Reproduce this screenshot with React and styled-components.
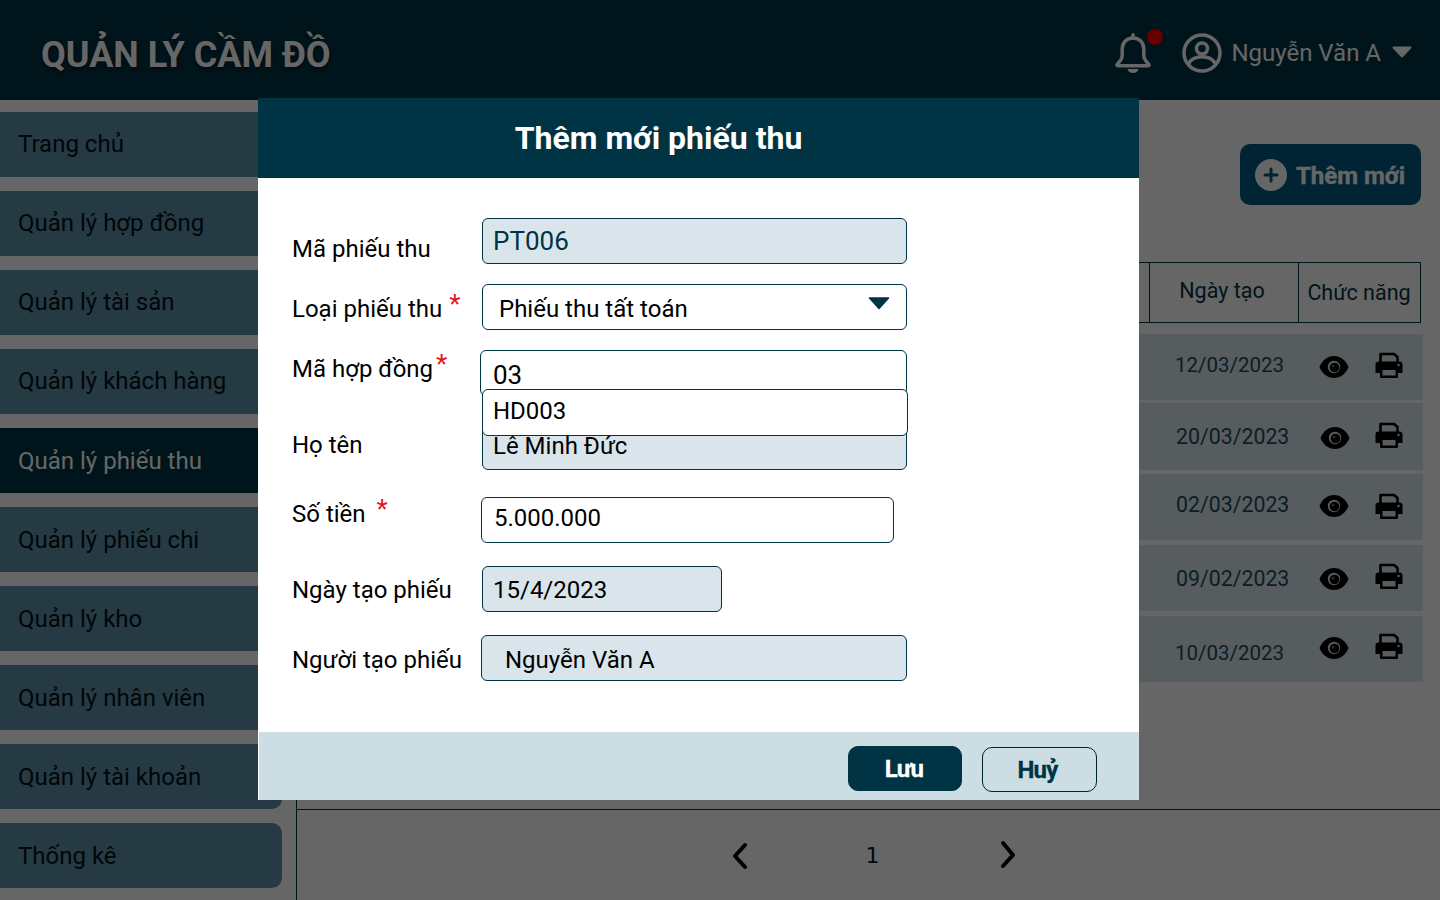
import React from "react";
import styled, { createGlobalStyle } from "styled-components";

const Global = createGlobalStyle`
  html, body { margin: 0; padding: 0; background: #fff; }
  body { font-family: Roboto, "Noto Sans", sans-serif; }
  * { box-sizing: border-box; }
`;

const Page = styled.div`
  position: relative;
  width: 1440px;
  height: 900px;
  overflow: hidden;
  background: #fff;
  color: #003344;
`;

const Header = styled.header`
  height: 100px;
  background: #003344;
  display: flex;
  align-items: center;
  padding: 6px 28px 0 41px;
`;

const Brand = styled.h1`
  margin: 4px 0 0;
  flex: 1;
  color: #fff;
  font-size: 36px;
  font-weight: 700;
  line-height: 44px;
  text-shadow: 0 2px 4px rgba(0, 0, 0, 0.5);
`;

const BellWrap = styled.div`
  position: relative;
  width: 36px;
  height: 40px;
  margin-right: 31px;
  color: #fff;
`;

const BellDot = styled.span`
  position: absolute;
  top: -4px;
  right: -12px;
  width: 16px;
  height: 16px;
  border-radius: 50%;
  background: #ff0000;
`;

const UserName = styled.span`
  margin-left: 9px;
  margin-right: 11px;
  color: #fff;
  font-size: 24px;
  line-height: 28px;
`;

const Caret = styled.svg`
  width: 20px;
  height: 12px;
  margin-top: -3px;
`;

const Body = styled.div`
  display: flex;
  height: 800px;
`;

const Side = styled.nav`
  width: 297px;
  flex: none;
  display: flex;
  flex-direction: column;
  gap: 14px;
  padding: 12px 14px 0 0;
  border-right: 1px solid #003344;
`;

const SideItem = styled.div`
  height: 65px;
  display: flex;
  align-items: center;
  padding: 0 0 ${(p) => p.$lift}px 18px;
  border-radius: 0 10px 10px 0;
  font-size: 24px;
  background: ${(p) => (p.$active ? "#003344" : "#5f91aa")};
  color: ${(p) => (p.$active ? "#fff" : "#001018")};
`;

const Main = styled.main`
  flex: 1;
  display: flex;
  flex-direction: column;
  min-width: 0;
`;

const Content = styled.div`
  height: 710px;
  padding: 44px 19px 0 0;
  border-bottom: 1px solid #003344;
  display: flex;
  flex-direction: column;
  align-items: flex-end;
`;

const AddButton = styled.button`
  width: 181px;
  height: 61px;
  display: flex;
  align-items: center;
  gap: 9px;
  padding: 0 0 0 15px;
  border: 0;
  border-radius: 10px;
  background: #005a80;
  color: #fff;
  font: 700 24px Roboto, sans-serif;
  -webkit-text-stroke: 0.4px #fff;
`;

const AddLabel = styled.span`
  padding-top: 2px;
`;

const PlusDisc = styled.svg`
  width: 32px;
  height: 32px;
`;

const TableHead = styled.div`
  width: 1115px;
  height: 61px;
  margin-top: 57px;
  display: grid;
  grid-template-columns: 1fr 149px 122px;
  border: 1px solid #003344;
  border-left: 0;
`;

const HeadCell = styled.div`
  display: flex;
  align-items: center;
  justify-content: center;
  border-left: 1px solid #003344;
  padding-bottom: ${(p) => p.$lift}px;
  padding-right: ${(p) => p.$right}px;
  font-size: ${(p) => p.$size}px;
  &:first-child { border-left: 0; }
`;

const Rows = styled.div`
  width: 1117px;
  margin: 11px -2px 0 0;
`;

const Row = styled.div`
  height: ${(p) => p.$h}px;
  margin-bottom: ${(p) => p.$gap}px;
  background: #d9e5eb;
  display: flex;
  justify-content: flex-end;
`;

const DateText = styled.span`
  width: 144px;
  padding-top: ${(p) => p.$y}px;
  padding-left: ${(p) => p.$x}px;
  font-size: ${(p) => p.$size}px;
  line-height: 26px;
  white-space: nowrap;
  opacity: 0.85;
`;

const EyeBox = styled.svg`
  width: 30px;
  height: 24px;
  margin-top: ${(p) => p.$y}px;
  margin-left: ${(p) => p.$x}px;
  flex: none;
`;

const PrintBox = styled.svg`
  width: 28px;
  height: 28px;
  margin-top: ${(p) => p.$y}px;
  margin-left: ${(p) => p.$x}px;
  margin-right: 20px;
  flex: none;
`;

const Pager = styled.div`
  flex: 1;
  display: flex;
  align-items: center;
  padding-left: 431px;
`;

const PageNo = styled.span`
  width: 248px;
  padding-right: 3px;
  text-align: center;
  font-family: "DejaVu Sans", sans-serif;
  font-size: 22px;
  color: #001a24;
`;

const Chevron = styled.svg`
  width: 22px;
  height: 30px;
  flex: none;
`;

const Backdrop = styled.div`
  position: absolute;
  inset: 0;
  background: rgba(0, 0, 0, 0.6);
`;

const Modal = styled.section`
  position: absolute;
  left: 258px;
  top: 98px;
  width: 881px;
  height: 702px;
  background: #fff;
  display: flex;
  flex-direction: column;
`;

const ModalHead = styled.div`
  height: 80px;
  flex: none;
  background: #003344;
  color: #fff;
  display: flex;
  align-items: center;
  justify-content: center;
  padding-right: 80px;
  font-size: 32px;
  font-weight: 700;
`;

const Form = styled.form`
  flex: 1;
  padding: 40px 0 0 34px;
`;

const Field = styled.div`
  position: relative;
  display: flex;
  height: 46px;
  margin-top: ${(p) => p.$top}px;
`;

const Label = styled.label`
  width: ${(p) => p.$w}px;
  flex: none;
  padding-top: ${(p) => p.$y}px;
  color: #000;
  font-size: 24px;
  line-height: 30px;
  white-space: nowrap;
`;

const Star = styled.span`
  color: #e8141c;
  font-size: 26px;
  line-height: 0;
  vertical-align: 4px;
  margin-left: ${(p) => p.$m}px;
`;

const Input = styled.div`
  width: ${(p) => p.$w}px;
  height: 46px;
  border: 1px solid #003344;
  border-radius: 6px;
  background: ${(p) => (p.$ro ? "#d9e5eb" : "#fff")};
  color: ${(p) => p.$color || "#000"};
  font-size: ${(p) => p.$size || 24}px;
  line-height: 28px;
  display: flex;
  align-items: ${(p) => p.$align || "center"};
  justify-content: space-between;
  padding: ${(p) => p.$pt || 0}px 16px ${(p) => p.$pb || 0}px ${(p) => p.$pad}px;
`;

const SelectArrow = styled.svg`
  width: 22px;
  height: 13px;
  margin-top: -11px;
`;

const Suggest = styled.div`
  position: absolute;
  left: 190px;
  top: 39px;
  width: 426px;
  height: 47px;
  z-index: 2;
  background: #fff;
  border: 1px solid #003344;
  border-radius: 6px;
  color: #000;
  font-size: 24px;
  display: flex;
  align-items: center;
  padding: 0 0 4px 10px;
`;

const ModalFoot = styled.div`
  height: 68px;
  flex: none;
  margin-left: 1px;
  background: #ccdde4;
  display: flex;
  gap: 20px;
  padding: 14px 42px 0 0;
  justify-content: flex-end;
`;

const FootButton = styled.button`
  width: ${(p) => p.$w}px;
  height: 45px;
  margin-top: ${(p) => p.$y}px;
  padding: 1px ${(p) => p.$pr}px 0 0;
  border: 1px solid ${(p) => (p.$primary ? "#003344" : "#00222e")};
  border-radius: 10px;
  background: ${(p) => (p.$primary ? "#003344" : "transparent")};
  color: ${(p) => (p.$primary ? "#fff" : "#003344")};
  font: 700 24px Roboto, sans-serif;
  letter-spacing: -0.8px;
  -webkit-text-stroke: 0.3px currentColor;
`;

const Bell = () => (
  <svg viewBox="0 0 36 40" width="36" height="40" fill="none" stroke="currentColor" strokeWidth="3.5" strokeLinejoin="round" strokeLinecap="round">
    <path d="M18 5c-6.800 0-10.800 5-10.800 11.200v6.300c0 3.500-2.200 6-4.900 8.700-.7.700-.3 1.500.7 1.500h30c1 0 1.400-.8.700-1.500-2.700-2.700-4.900-5.200-4.900-8.700v-6.300C28.800 10 24.800 5 18 5z" />
    <path d="M18 1.800v3" />
    <path d="M12.500 36h11c-.6 2.500-2.600 4-5.500 4s-4.900-1.500-5.500-4z" fill="currentColor" stroke="none" />
  </svg>
);

const UserIcon = () => (
  <svg viewBox="0 0 40 40" width="40" height="40" fill="none" stroke="#fff" strokeWidth="3.5">
    <circle cx="20" cy="20" r="18" />
    <circle cx="20" cy="15.500" r="5.500" />
    <path d="M6.500 31c2.300-4.500 7-7.200 13.500-7.200S31.200 26.500 33.500 31" />
  </svg>
);

const Eye = ({ x, y }) => (
  <EyeBox viewBox="0 0 30 24" $x={x} $y={y}>
    <path fill="#000" d="M15 1C8.500 1 3.200 5.200.5 12c2.700 6.800 8 11 14.500 11s11.800-4.200 14.500-11C26.800 5.200 21.500 1 15 1z" />
    <circle cx="15" cy="12" r="6.200" fill="#d9e5eb" />
    <circle cx="15.500" cy="12.500" r="4.800" fill="#000" />
    <circle cx="14" cy="11" r="1.500" fill="#d9e5eb" opacity="0.45" />
  </EyeBox>
);

const Printer = ({ x, y }) => (
  <PrintBox viewBox="0 0 28 28" $x={x} $y={y}>
    <path fill="none" stroke="#000" strokeWidth="2.600" strokeLinejoin="round" d="M5.500 11V3h13.500l3.500 3v5" />
    <path fill="#000" fillRule="evenodd" d="M3.500 10.500h21c1.700 0 3 1.300 3 3V22h-4.500v3.500c0 1-.7 1.500-1.500 1.500h-15c-.8 0-1.500-.5-1.500-1.500V22H.5v-8.500c0-1.700 1.300-3 3-3zM7.500 19v5.500h13V19h-13z" />
    <circle cx="23.500" cy="14" r="1.200" fill="#d9e5eb" />
  </PrintBox>
);

const menu = [
  "Trang chủ",
  "Quản lý hợp đồng",
  "Quản lý tài sản",
  "Quản lý khách hàng",
  "Quản lý phiếu thu",
  "Quản lý phiếu chi",
  "Quản lý kho",
  "Quản lý nhân viên",
  "Quản lý tài khoản",
  "Thống kê",
];

const rows = [
  { d: "12/03/2023", h: 66, gap: 3, s: 20.5, dx: 0, dy: 18, ex: 0, ey: 21, px: 26, py: 17 },
  { d: "20/03/2023", h: 67, gap: 4, s: 21.3, dx: 2, dy: 21, ex: 2, ey: 23, px: 25, py: 18 },
  { d: "02/03/2023", h: 66, gap: 5, s: 21.3, dx: 1, dy: 18, ex: 0, ey: 20, px: 26, py: 18 },
  { d: "09/02/2023", h: 66, gap: 5, s: 21.3, dx: 1, dy: 21, ex: 0, ey: 22, px: 26, py: 17 },
  { d: "10/03/2023", h: 66, gap: 0, s: 20.5, dx: 0, dy: 24, ex: 0, ey: 20, px: 26, py: 16 },
];

export default function App() {
  return (
    <Page>
      <Global />
      <Header>
        <Brand>QUẢN LÝ CẦM ĐỒ</Brand>
        <BellWrap>
          <Bell />
          <BellDot />
        </BellWrap>
        <UserIcon />
        <UserName>Nguyễn Văn A</UserName>
        <Caret viewBox="0 0 20 12">
          <path fill="#fff" stroke="#fff" strokeWidth="2" strokeLinejoin="round" d="M1.500 1.500h17L10 10.500z" />
        </Caret>
      </Header>
      <Body>
        <Side>
          {menu.map((m, i) => (
            <SideItem key={m} $lift={i < 4 ? 2 : 0} $active={m === "Quản lý phiếu thu"}>{m}</SideItem>
          ))}
        </Side>
        <Main>
          <Content>
            <AddButton>
              <PlusDisc viewBox="0 0 32 32">
                <circle cx="16" cy="16" r="16" fill="#fff" />
                <path d="M16 10v12M10 16h12" stroke="#005a80" strokeWidth="3" strokeLinecap="round" />
              </PlusDisc>
              <AddLabel>Thêm mới</AddLabel>
            </AddButton>
            <TableHead>
              <HeadCell />
              <HeadCell $size={21.5} $lift={4} $right={4}>Ngày tạo</HeadCell>
              <HeadCell $size={21.5} $lift={0} $right={1}>Chức năng</HeadCell>
            </TableHead>
            <Rows>
              {rows.map((r) => (
                <Row key={r.d} $h={r.h} $gap={r.gap}>
                  <DateText $y={r.dy} $x={r.dx} $size={r.s}>{r.d}</DateText>
                  <Eye x={r.ex} y={r.ey} />
                  <Printer x={r.px} y={r.py} />
                </Row>
              ))}
            </Rows>
          </Content>
          <Pager>
            <Chevron viewBox="0 0 22 30">
              <path d="M17 5L7 16l10 11" fill="none" stroke="#000" strokeWidth="4" strokeLinecap="round" strokeLinejoin="round" />
            </Chevron>
            <PageNo>1</PageNo>
            <Chevron viewBox="0 0 22 30">
              <path d="M5 3l10 12L5 26" fill="none" stroke="#000" strokeWidth="4" strokeLinecap="round" strokeLinejoin="round" />
            </Chevron>
          </Pager>
        </Main>
      </Body>
      <Backdrop />
      <Modal>
        <ModalHead>Thêm mới phiếu thu</ModalHead>
        <Form>
          <Field $top={0}>
            <Label $w={190} $y={16}>Mã phiếu thu</Label>
            <Input $w={425} $ro $pad={10} $color="#003344" $size={26}>PT006</Input>
          </Field>
          <Field $top={20}>
            <Label $w={190} $y={10}>Loại phiếu thu <Star $m={1}>*</Star></Label>
            <Input $w={425} $pad={16} $pt={4}>
              Phiếu thu tất toán
              <SelectArrow viewBox="0 0 22 13">
                <path fill="#003344" stroke="#003344" strokeWidth="1.500" strokeLinejoin="round" d="M1.500 1h19L11 11.500z" />
              </SelectArrow>
            </Input>
          </Field>
          <Field $top={20}>
            <Label $w={188} $y={4}>Mã hợp đồng<Star $m={3}>*</Star></Label>
            <Input $w={427} $pad={12} $pt={10} $size={26} $align="flex-start">03</Input>
            <Suggest>HD003</Suggest>
          </Field>
          <Field $top={28}>
            <Label $w={190} $y={6}>Họ tên</Label>
            <Input $w={425} $ro $pad={10} $pt={7} $align="flex-start">Lê Minh Đức</Input>
          </Field>
          <Field $top={27}>
            <Label $w={189} $y={2}>Số tiền <Star $m={5}>*</Star></Label>
            <Input $w={413} $pad={12} $pb={4}>5.000.000</Input>
          </Field>
          <Field $top={23}>
            <Label $w={190} $y={9}>Ngày tạo phiếu</Label>
            <Input $w={240} $ro $pad={10} $pt={2}>15/4/2023</Input>
          </Field>
          <Field $top={23}>
            <Label $w={189} $y={10}>Người tạo phiếu</Label>
            <Input $w={426} $ro $pad={23} $pt={4}>Nguyễn Văn A</Input>
          </Field>
        </Form>
        <ModalFoot>
          <FootButton $primary $w={114} $y={0} $pr={2}>Lưu</FootButton>
          <FootButton $w={115} $y={1} $pr={4}>Huỷ</FootButton>
        </ModalFoot>
      </Modal>
    </Page>
  );
}
